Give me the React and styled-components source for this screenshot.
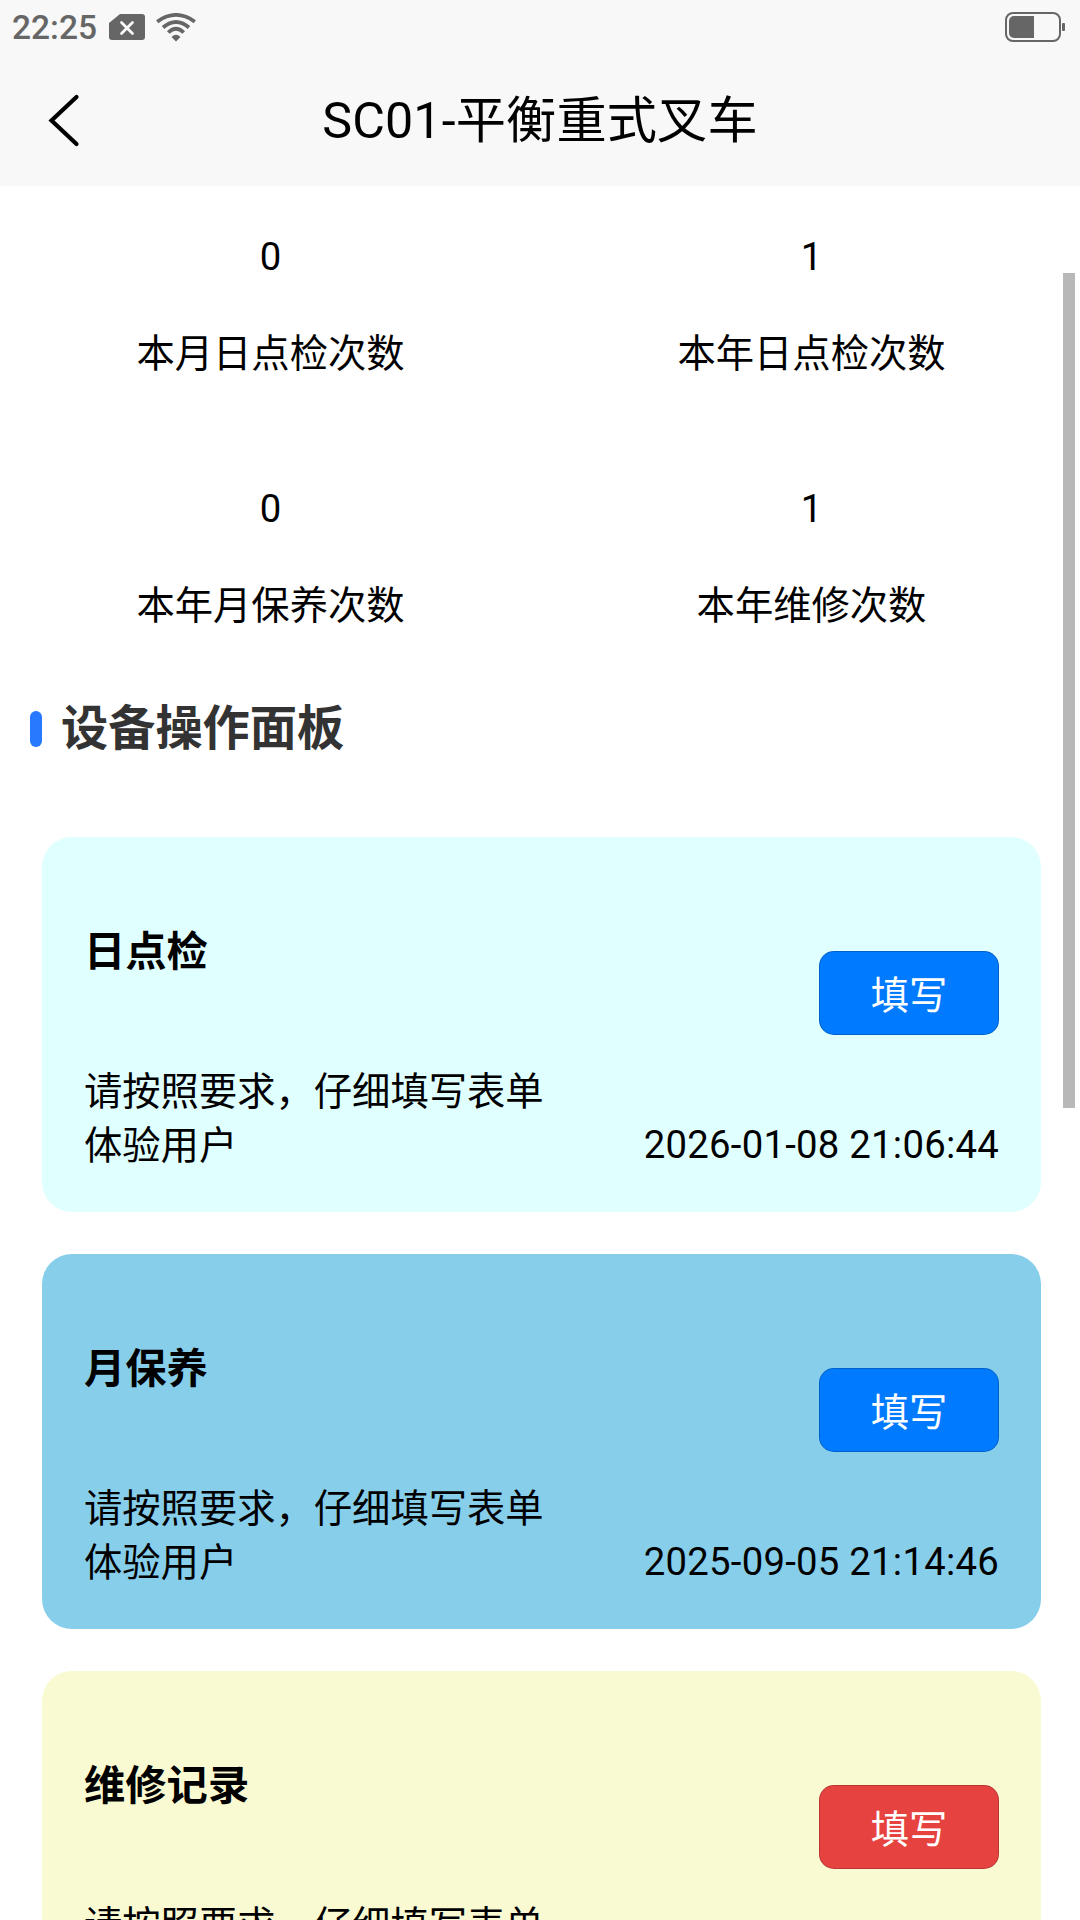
import React from 'react';
import styled, { createGlobalStyle } from 'styled-components';

const GlobalStyle = createGlobalStyle`
	* {
		box-sizing: border-box;
	}

	body {
		margin: 0;
		background-color: #fff;
		color: #000;
		font-family: Roboto, 'Noto Sans CJK SC', sans-serif;
		font-size: 38.3px;
		line-height: 54px;
	}
`;

const Page = styled.div`
	position: relative;
	width: 1080px;
	height: 1920px;
	overflow: hidden;
	display: flex;
	flex-direction: column;
`;

const Header = styled.header`
	flex-shrink: 0;
	background-color: #f8f8f8;
`;

const StatusBar = styled.div`
	height: 54px;
	padding: 0 15px 0 12px;
	display: flex;
	align-items: center;
	color: #666;
`;

const Clock = styled.div`
	width: 97px;
	padding-top: 2px;
	font-size: 33.5px;
	font-weight: 500;
	white-space: nowrap;
`;

const StatusIcon = styled.svg`
	display: block;
	flex-shrink: 0;
	margin-left: ${(props) => props.$gap || '0'};
`;

const NavBar = styled.div`
	height: 132px;
	padding: 0 45px;
	display: grid;
	grid-template-columns: 60px 1fr 60px;
	align-items: center;
`;

const BackBtn = styled.button`
	height: 60px;
	padding: 0;
	border: none;
	background: none;
	display: flex;
	align-items: center;
	cursor: pointer;
`;

const NavTitle = styled.h1`
	margin: 0;
	padding-top: 2px;
	font-size: 50.2px;
	font-weight: 400;
	letter-spacing: 0.15px;
	text-align: center;
	white-space: nowrap;
`;

const StatGrid = styled.section`
	flex-shrink: 0;
	display: grid;
	grid-template-columns: 541px 541px;
	grid-auto-rows: 252px;
`;

const Stat = styled.div`
	padding-top: 44px;
	display: flex;
	flex-direction: column;
	align-items: center;
	gap: 43px;
`;

const SectionTitle = styled.h2`
	flex-shrink: 0;
	height: 72px;
	margin: 3px 0 72px;
	padding-left: 30px;
	display: flex;
	align-items: center;
	gap: 19px;
	color: #333;
	font-size: 47.2px;
	font-weight: 700;

	&::before {
		content: '';
		width: 12px;
		height: 36px;
		border-radius: 6px;
		background-color: #2979ff;
	}
`;

const CardList = styled.div`
	padding: 0 39px 0 42px;
	display: flex;
	flex-direction: column;
	gap: 42px;
`;

const Card = styled.article`
	flex-shrink: 0;
	height: 375px;
	padding: 84px 42px 0;
	border-radius: 30px;
	background-color: ${(props) => props.$color};
`;

const CardTop = styled.div`
	height: 144px;
	display: flex;
	justify-content: space-between;
`;

const CardTitle = styled.h3`
	margin: 4px 0 0;
	font-size: 41.3px;
	font-weight: 700;
`;

const FillBtn = styled.button`
	width: 180px;
	height: 84px;
	margin-top: 30px;
	padding: 0 0 2px;
	border: 1px solid rgba(0, 0, 0, 0.2);
	border-radius: 15px;
	background-color: ${(props) => (props.$warn ? '#e64340' : '#007aff')};
	color: white;
	font-family: inherit;
	font-size: 38.3px;
	cursor: pointer;
`;

const CardRow = styled.div`
	display: flex;
	justify-content: space-between;
`;

const Time = styled.span`
	margin-top: -1px;
	letter-spacing: 0.25px;
`;

const ScrollThumb = styled.div`
	position: absolute;
	top: 273px;
	right: 5px;
	width: 12px;
	height: 835px;
	background-color: #b8b8b8;
`;

const stats = [
	{ label: '本月日点检次数', value: 0 },
	{ label: '本年日点检次数', value: 1 },
	{ label: '本年月保养次数', value: 0 },
	{ label: '本年维修次数', value: 1 },
];

const cards = [
	{ title: '日点检', color: '#e0ffff', time: '2026-01-08 21:06:44' },
	{ title: '月保养', color: '#87ceeb', time: '2025-09-05 21:14:46' },
	{ title: '维修记录', color: '#fafad2', warn: true },
];

const App = () => {
	return (
		<Page>
			<GlobalStyle />
			<Header>
				<StatusBar>
					<Clock>22:25</Clock>
					<StatusIcon width="36" height="26" viewBox="0 0 36 26">
						<path d="M11 0H33a3 3 0 0 1 3 3V23a3 3 0 0 1-3 3H3a3 3 0 0 1-3-3V9z" fill="#666" />
						<path d="M12.5 8.5l11 11M23.5 8.5l-11 11" stroke="#f8f8f8" strokeWidth="2.8" strokeLinecap="round" />
					</StatusIcon>
					<StatusIcon $gap="11px" width="40" height="29" viewBox="0 0 40 29">
						<g fill="none" stroke="#666" strokeWidth="3.8">
							<path d="M1.2 8.7Q20-4.9 38.800 8.700" />
							<path d="M7 14.500Q20 3.500 33 14.500" />
							<path d="M12.300 19.500Q20 11.900 27.700 19.500" />
						</g>
						<path d="M15.500 24Q20 19.500 24.500 24L20 28.500z" fill="#666" />
					</StatusIcon>
					<StatusIcon $gap="auto" width="60" height="30" viewBox="0 0 60 30">
						<rect x="1" y="1" width="54" height="28" rx="7" fill="none" stroke="#666" strokeWidth="2" />
						<path d="M29 4V26H9a5 5 0 0 1-5-5V9a5 5 0 0 1 5-5z" fill="#666" />
						<rect x="57" y="11" width="3" height="8" rx="1" fill="#666" />
					</StatusIcon>
				</StatusBar>
				<NavBar>
					<BackBtn aria-label="返回">
						<svg width="36" height="54" viewBox="0 0 36 54">
							<path d="M31.500 4L6.500 27.500L31.500 51" fill="none" stroke="#000" strokeWidth="4.200" strokeLinecap="round" />
						</svg>
					</BackBtn>
					<NavTitle>SC01-平衡重式叉车</NavTitle>
				</NavBar>
			</Header>
			<StatGrid>
				{stats.map((stat) => (
					<Stat key={stat.label}>
						<span>{stat.value}</span>
						<span>{stat.label}</span>
					</Stat>
				))}
			</StatGrid>
			<SectionTitle>设备操作面板</SectionTitle>
			<CardList>
				{cards.map((card) => (
					<Card key={card.title} $color={card.color}>
						<CardTop>
							<CardTitle>{card.title}</CardTitle>
							<FillBtn $warn={card.warn}>填写</FillBtn>
						</CardTop>
						<div>请按照要求，仔细填写表单</div>
						{card.time && (
							<CardRow>
								<span>体验用户</span>
								<Time>{card.time}</Time>
							</CardRow>
						)}
					</Card>
				))}
			</CardList>
			<ScrollThumb />
		</Page>
	);
};

export default App;
